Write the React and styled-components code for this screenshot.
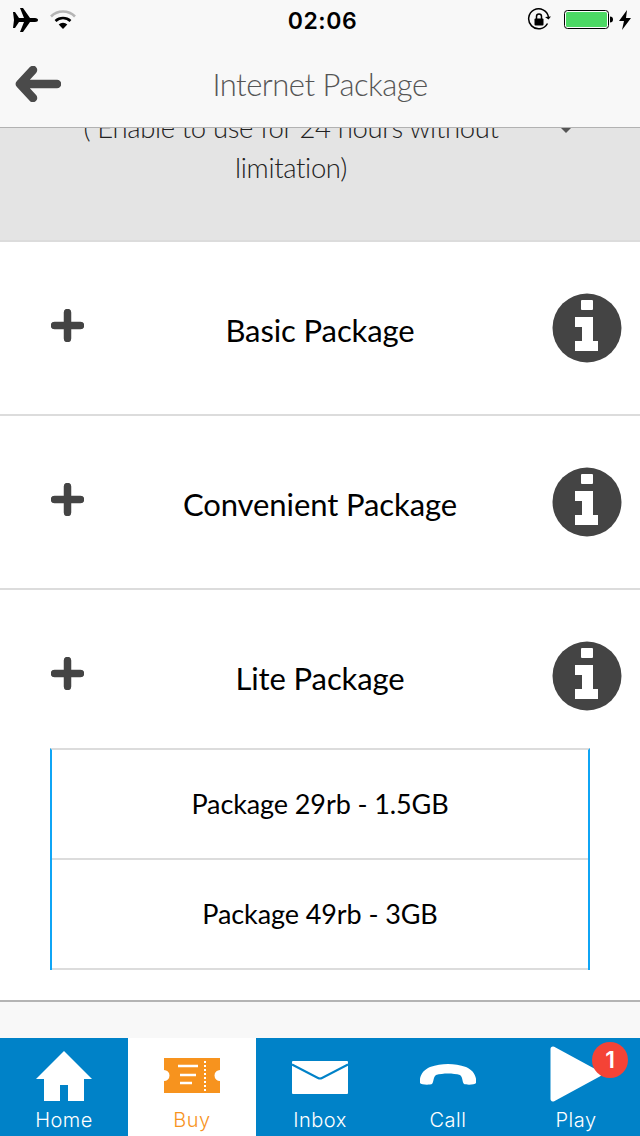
import React from "react";
import styled, { createGlobalStyle } from "styled-components";

const GlobalStyle = createGlobalStyle`
  html, body {
    margin: 0;
    padding: 0;
    background: #f8f8f8;
  }
  * {
    box-sizing: border-box;
  }
`;

const Screen = styled.div`
  width: 640px;
  height: 1136px;
  display: flex;
  flex-direction: column;
  overflow: hidden;
  background: #f8f8f8;
  font-family: Lato, "Open Sans", sans-serif;
  color: #000;
`;

const Top = styled.header`
  flex: none;
  height: 128px;
  background: #f8f8f8;
  border-bottom: 1px solid #b2b2b2;
`;

const StatusBar = styled.div`
  height: 40px;
  display: grid;
  grid-template-columns: 1fr auto 1fr;
  align-items: center;
  padding: 0 9px 0 12px;
`;

const StatusSide = styled.div`
  display: flex;
  align-items: center;
  justify-content: ${(p) => (p.$right ? "flex-end" : "flex-start")};
`;

const Time = styled.div`
  font-family: Inter, "Liberation Sans", sans-serif;
  font-size: 23px;
  font-weight: 600;
  letter-spacing: 0.6px;
  margin: 1px 0 0 2px;
`;

const NavBar = styled.div`
  height: 87px;
  display: grid;
  grid-template-columns: 80px 1fr 80px;
  align-items: center;
`;

const BackButton = styled.button`
  border: none;
  background: none;
  padding: 0 0 0 15px;
  display: flex;
  align-items: center;
  height: 40px;
`;

const Title = styled.h1`
  margin: 0;
  font-size: 31px;
  font-weight: 300;
  text-align: center;
  color: #555;
  letter-spacing: -0.5px;
  line-height: 36px;
`;

const Content = styled.main`
  flex: 1;
  min-height: 0;
  display: flex;
  flex-direction: column;
`;

const Banner = styled.section`
  position: relative;
  flex: none;
  height: 114px;
  overflow: hidden;
  background: #e4e4e4;
  border-bottom: 2px solid #dcdcdc;
`;

const BannerText = styled.p`
  width: 582px;
  margin: -20px 0 0;
  padding: 0 70px;
  font-size: 27.500px;
  font-weight: 300;
  line-height: 40px;
  text-align: center;
  color: #222;
  letter-spacing: -0.35px;
`;

const Caret = styled.span`
  position: absolute;
  top: 0;
  left: 561px;
  width: 0;
  height: 0;
  border-left: 5px solid transparent;
  border-right: 5px solid transparent;
  border-top: 5px solid #555;
`;

const Panel = styled.section`
  flex: none;
  background: #fff;
  padding-bottom: ${(p) => (p.$open ? 30 : 14)}px;
  border-bottom: ${(p) => (p.$open ? "2px solid #b4b4b4" : "2px solid #dcdcdc")};
`;

const PanelHead = styled.div`
  height: 158px;
  padding-top: 17px;
  display: grid;
  grid-template-columns: 140px 1fr 140px;
  align-items: center;
`;

const PlusWrap = styled.div`
  padding-left: 51px;
  display: flex;
  margin-top: -8px;
`;

const PanelTitle = styled.div`
  font-size: 31px;
  font-weight: 400;
  text-align: center;
  line-height: 36px;
  letter-spacing: -0.1px;
  white-space: nowrap;
`;

const InfoWrap = styled.div`
  display: flex;
  justify-content: flex-end;
  padding-right: 18px;
  margin-top: -3px;
`;

const SubList = styled.div`
  margin: 0 50px;
  border-left: 2px solid #0fa5f5;
  border-right: 2px solid #0fa5f5;
  border-top: 2px solid #dcdcdc;
`;

const SubItem = styled.div`
  height: 110px;
  display: flex;
  align-items: center;
  justify-content: center;
  border-bottom: 2px solid #dcdcdc;
  font-size: 27px;
  font-weight: 400;
  letter-spacing: -0.1px;
  padding-bottom: 1px;
`;

const Spacer = styled.div`
  flex: 1;
  background: #f8f8f8;
`;

const TabBar = styled.nav`
  flex: none;
  height: 98px;
  display: grid;
  grid-template-columns: repeat(5, 128px);
  background: #0082c8;
`;

const Tab = styled.div`
  position: relative;
  display: flex;
  flex-direction: column;
  align-items: center;
  background: ${(p) => (p.$active ? "#fff" : "transparent")};
  color: ${(p) => (p.$active ? "#f7931e" : "#fff")};
`;

const TabIcon = styled.div`
  height: 70px;
  display: flex;
  align-items: flex-start;
  justify-content: center;
`;

const TabLabel = styled.span`
  font-family: Inter, "Liberation Sans", sans-serif;
  font-size: 20px;
  font-weight: 300;
  line-height: 24px;
  letter-spacing: 0.5px;
`;

const Badge = styled.span`
  position: absolute;
  top: 4px;
  left: 80px;
  width: 36px;
  height: 36px;
  border-radius: 50%;
  background: #f44336;
  color: #fff;
  display: flex;
  align-items: center;
  justify-content: center;
  font-family: Inter, "Liberation Sans", sans-serif;
  font-size: 23px;
  font-weight: 600;
`;

const LockGap = styled.span`
  width: 13px;
`;

const BoltGap = styled.span`
  width: 5px;
`;

const Plane = () => (
  <svg width="26" height="24" viewBox="0 0 26 24">
    <path
      fill="#000"
      d="M1 4l2 0 4 6 5 0L8 0h3l7 10h5c2 0 3 1 3 2s-1 2-3 2h-5l-7 10H8l4-10H7l-4 6H1l1-8z"
    />
  </svg>
);

const Wifi = () => (
  <svg width="26" height="22" viewBox="0 0 26 22" style={{ marginLeft: 12 }}>
    <path d="M1 7.500a17 17 0 0 1 24 0" fill="none" stroke="#b5b5b5" strokeWidth="2.600" />
    <path d="M5.500 12a11 11 0 0 1 15 0" fill="none" stroke="#000" strokeWidth="2.600" />
    <path d="M8.700 15.500a6 6 0 0 1 8.600 0L13 20z" fill="#000" />
  </svg>
);

const RotationLock = () => (
  <svg width="24" height="24" viewBox="0 0 24 24">
    <path d="M20.500 15.500A10 10 0 1 1 21.500 9" fill="none" stroke="#000" strokeWidth="1.500" />
    <path d="M18 9l3.500 2.500L24 8.500z" fill="#000" />
    <rect x="7.500" y="10.500" width="9" height="7" rx="1" fill="#000" />
    <path d="M9.500 11V8.500a2.500 2.500 0 0 1 5 0V11" fill="none" stroke="#000" strokeWidth="1.500" />
  </svg>
);

const Battery = () => (
  <svg width="50" height="20" viewBox="0 0 50 20">
    <rect x="0.500" y="0.500" width="44" height="18" rx="3" fill="#fff" stroke="#000" />
    <rect x="2" y="2" width="41" height="15" rx="1.500" fill="#4cd964" />
    <path d="M46 6.500c2 0 3 1 3 3s-1 3-3 3z" fill="#000" />
  </svg>
);

const Bolt = () => (
  <svg width="12" height="20" viewBox="0 0 12 20">
    <path d="M8 0L0 11h5l-2 9 9-12H7z" fill="#000" />
  </svg>
);

const BackArrow = () => (
  <svg width="46" height="36" viewBox="0 0 46 36">
    <path
      d="M18 4L5 18l13 14M6 18h36"
      fill="none"
      stroke="#4a4a4a"
      strokeWidth="8.500"
      strokeLinecap="round"
      strokeLinejoin="round"
    />
  </svg>
);

const PlusIcon = () => (
  <svg width="33" height="33" viewBox="0 0 33 33">
    <path d="M16.500 3.500v26M3.500 16.500h26" stroke="#444" strokeWidth="7.500" strokeLinecap="round" />
  </svg>
);

const InfoIcon = () => (
  <svg width="70" height="70" viewBox="0 0 70 70">
    <circle cx="35" cy="35" r="34.500" fill="#444" />
    <rect x="29" y="7" width="12" height="10" rx="1" fill="#fff" />
    <path d="M23 24h18v24h5v10H23V48h7V34h-7z" fill="#fff" />
  </svg>
);

const HomeIcon = () => (
  <svg width="58" height="52" viewBox="0 0 58 52" style={{ marginTop: 12 }}>
    <path d="M29 1L1 29h8v22h16V35h8v16h16V29h8z" fill="#fff" />
  </svg>
);

const TicketIcon = () => (
  <svg width="56" height="35" viewBox="0 0 56 35" style={{ marginTop: 20 }}>
    <path d="M0 0h56v12a5.500 5.500 0 0 0 0 11v12H0V23a5.500 5.500 0 0 0 0-11z" fill="#f7931e" />
    <path d="M14 8h20M16 17h16M16 25h12" stroke="#fff" strokeWidth="2.500" />
    <path d="M41 3v30" stroke="#fff" strokeWidth="2" strokeDasharray="2 2" />
  </svg>
);

const MailIcon = () => (
  <svg width="56" height="33" viewBox="0 0 56 33" style={{ marginTop: 23 }}>
    <rect x="0" y="0" width="56" height="33" rx="1" fill="#fff" />
    <path d="M0 3.500L26 17q2 1 4 0L56 3.500" fill="none" stroke="#0082c8" strokeWidth="2" />
  </svg>
);

const PhoneIcon = () => (
  <svg width="56" height="21" viewBox="0 0 56 21" style={{ marginTop: 26 }}>
    <path
      d="M0 19C-1 12 3 6 10 3c12-4 24-4 36 0 7 3 11 9 10 16-1 2-10 2-12 1-2-2-1-7-4-9-7-2-17-2-24 0-3 2-2 7-4 9-2 1-11 1-12-1z"
      fill="#fff"
    />
  </svg>
);

const PlayIcon = () => (
  <svg width="52" height="58" viewBox="0 0 52 58" style={{ marginTop: 7 }}>
    <path d="M3 4l46 25L3 54z" fill="#fff" stroke="#fff" strokeWidth="5" strokeLinejoin="round" />
  </svg>
);

const packages = ["Basic Package", "Convenient Package"];

const Row = ({ title, open, children }) => (
  <Panel $open={open}>
    <PanelHead>
      <PlusWrap>
        <PlusIcon />
      </PlusWrap>
      <PanelTitle>{title}</PanelTitle>
      <InfoWrap>
        <InfoIcon />
      </InfoWrap>
    </PanelHead>
    {children}
  </Panel>
);

export default function App() {
  return (
    <Screen>
      <GlobalStyle />
      <Top>
        <StatusBar>
          <StatusSide>
            <Plane />
            <Wifi />
          </StatusSide>
          <Time>02:06</Time>
          <StatusSide $right>
            <RotationLock />
            <LockGap />
            <Battery />
            <BoltGap />
            <Bolt />
          </StatusSide>
        </StatusBar>
        <NavBar>
          <BackButton>
            <BackArrow />
          </BackButton>
          <Title>Internet Package</Title>
        </NavBar>
      </Top>
      <Content>
        <Banner>
          <BannerText>( Enable to use for 24 hours without limitation)</BannerText>
          <Caret />
        </Banner>
        {packages.map((name) => (
          <Row key={name} title={name} />
        ))}
        <Row title="Lite Package" open>
          <SubList>
            <SubItem>Package 29rb - 1.5GB</SubItem>
            <SubItem>Package 49rb - 3GB</SubItem>
          </SubList>
        </Row>
        <Spacer />
      </Content>
      <TabBar>
        <Tab>
          <TabIcon>
            <HomeIcon />
          </TabIcon>
          <TabLabel>Home</TabLabel>
        </Tab>
        <Tab $active>
          <TabIcon>
            <TicketIcon />
          </TabIcon>
          <TabLabel>Buy</TabLabel>
        </Tab>
        <Tab>
          <TabIcon>
            <MailIcon />
          </TabIcon>
          <TabLabel>Inbox</TabLabel>
        </Tab>
        <Tab>
          <TabIcon>
            <PhoneIcon />
          </TabIcon>
          <TabLabel>Call</TabLabel>
        </Tab>
        <Tab>
          <TabIcon>
            <PlayIcon />
          </TabIcon>
          <TabLabel>Play</TabLabel>
          <Badge>1</Badge>
        </Tab>
      </TabBar>
    </Screen>
  );
}
